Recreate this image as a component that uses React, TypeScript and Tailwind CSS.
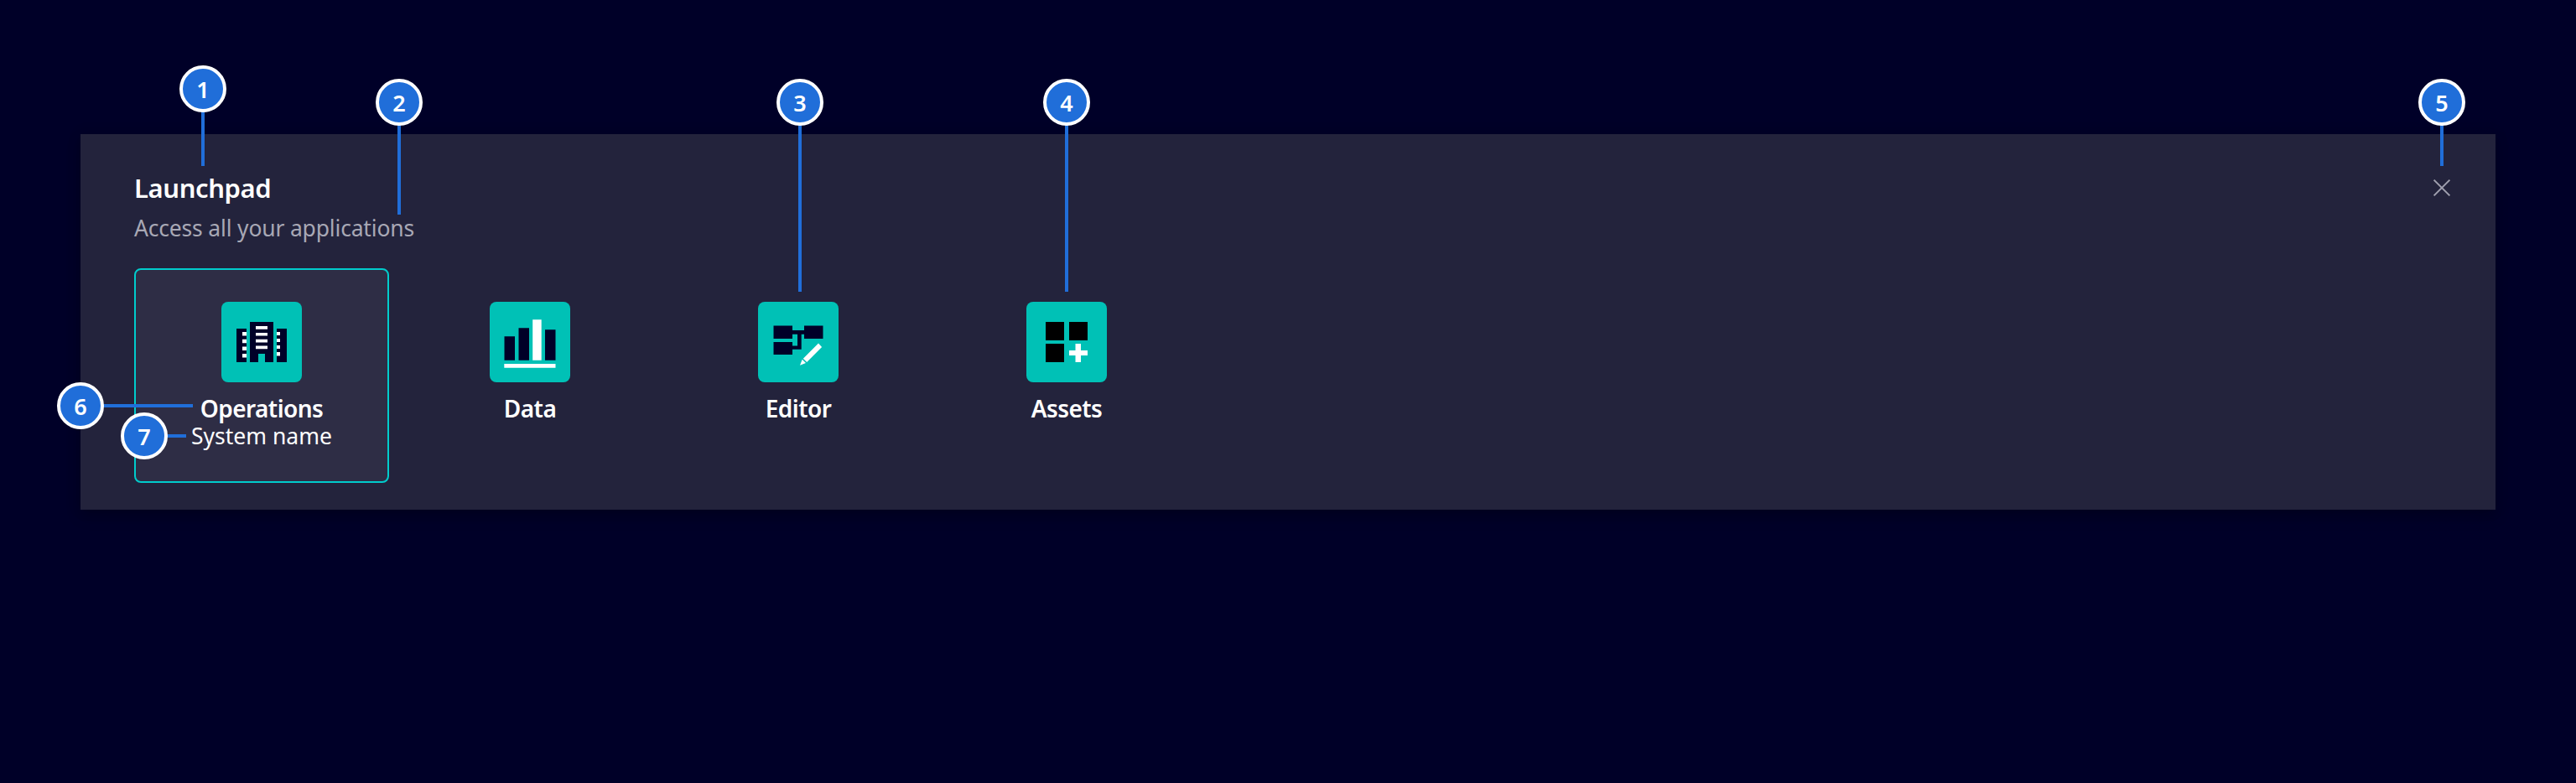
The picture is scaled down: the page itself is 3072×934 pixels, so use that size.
import type { ReactNode } from "react";

type Marker = { n: number; pos: string; line: string };

const markers: Marker[] = [
  { n: 1, pos: "left-[214px] top-[78px]", line: "left-[26px] top-[54px] w-1 h-[66px]" },
  { n: 2, pos: "left-[448px] top-[94px]", line: "left-[26px] top-[54px] w-1 h-[108px]" },
  { n: 3, pos: "left-[926px] top-[94px]", line: "left-[26px] top-[54px] w-1 h-[200px]" },
  { n: 4, pos: "left-[1244px] top-[94px]", line: "left-[26px] top-[54px] w-1 h-[200px]" },
  { n: 5, pos: "left-[2884px] top-[94px]", line: "left-[26px] top-[54px] w-1 h-[50px]" },
  { n: 6, pos: "left-[68px] top-[456px]", line: "left-[54px] top-[26px] h-1 w-[108px]" },
  { n: 7, pos: "left-[144px] top-[492px]", line: "left-[54px] top-[26px] h-1 w-[24px]" },
];

const navy = "#000028";

function OperationsIcon() {
  return (
    <>
      <path fill={navy} d="M18 32h12v40H18zM66 32h12v40H66zM34 24h28v48H52V62h-8v10H34z" />
      <path
        fill="#fff"
        d="M25 36h5v4.6h-5zM25 44.7h5v4.6h-5zM25 53.4h5V58h-5zM25 62h5v4.6h-5zM66 36h4v4h-4zM66 44h4v4h-4zM66 52h4v4h-4zM66 60h4v4.4h-4zM41 29h14v3.8H41zM41 37h14v3.6H41zM41 44.8h14v3.6H41zM41 52.4h14v3.8H41z"
      />
    </>
  );
}

function DataIcon() {
  return (
    <>
      <path fill={navy} d="M17.5 41.3H30v28.4H17.5zM34.5 31.2H47v38.5H34.5zM66 33.3h12.5v36.4H66z" />
      <path fill="#fff" d="M51.2 21.3h10.5v48.4H51.2zM17.3 74h61.2v4.8H17.3z" />
    </>
  );
}

function EditorIcon() {
  return (
    <>
      <path
        fill={navy}
        d="M18.5 28.5H41V34h14v-5.5h22.5V44H55v-5.3h-3.3v18.1H41V63H18.5V48H41v4.5h6V38.7h-6V44H18.5z"
      />
      <path fill="#fff" d="M72 49.6 76.1 54 58.2 72.1 53.8 67.8zM52.7 68.8 57 73 50 75.8z" />
    </>
  );
}

function AssetsIcon() {
  return (
    <>
      <path fill="#000" d="M23 24h22v22H23zM51 24h22v22H51zM23 50h22v22H23z" />
      <path fill="#fff" d="M58.5 50H65v8h8v6h-8v8h-6.5v-8H51v-6h7.5z" />
    </>
  );
}

function Tile({ icon, label, system, active }: { icon: ReactNode; label: string; system?: string; active?: boolean }) {
  return (
    <div
      className={`flex h-64 w-[304px] flex-col items-center rounded-lg border-2 pt-[38px] ${
        active ? "border-[#00cccc] bg-[#2e2d45]" : "border-transparent"
      }`}
    >
      <svg viewBox="0 0 96 96" className="size-24 shrink-0 rounded-lg bg-[#00c1b6]">
        {icon}
      </svg>
      <span className="mt-[15px] text-[28px] leading-8 font-semibold tracking-[-0.55px] whitespace-nowrap text-white">
        {label}
      </span>
      {system && (
        <span className="mt-px text-[26.5px] leading-8 whitespace-nowrap text-white">{system}</span>
      )}
    </div>
  );
}

export default function App() {
  return (
    <div className="relative h-[934px] w-[3072px] overflow-hidden bg-[#000028] px-24 pt-40 font-['Noto_Sans',sans-serif]">
      <section className="h-[448px] bg-[#23233c] px-16 pt-11 shadow-[0_0_16px_rgba(0,0,0,0.1),0_8px_16px_rgba(0,0,0,0.2)]">
        <header className="flex h-[116px] justify-between">
          <div className="flex flex-col items-start">
            <h1 className="text-[31px] leading-10 font-semibold tracking-[-0.4px] whitespace-nowrap text-white">
              Launchpad
            </h1>
            <p className="mt-2 text-[26.5px] leading-10 tracking-[-0.18px] whitespace-nowrap text-[#a8a8b5]">
              Access all your applications
            </p>
          </div>
          <svg viewBox="0 0 20 20" className="-mr-[10px] mt-[10px] size-5 overflow-visible">
            <path d="M.6.6l18.8 18.8M19.4.6L.6 19.4" stroke="#a0a0af" strokeWidth="2" fill="none" />
          </svg>
        </header>
        <div className="flex gap-4">
          <Tile active icon={<OperationsIcon />} label="Operations" system="System name" />
          <Tile icon={<DataIcon />} label="Data" />
          <Tile icon={<EditorIcon />} label="Editor" />
          <Tile icon={<AssetsIcon />} label="Assets" />
        </div>
      </section>
      {markers.map((m) => (
        <div key={m.n} className={`absolute size-14 ${m.pos}`}>
          <div className={`absolute bg-[#206ed9] ${m.line}`} />
          <div className="relative flex size-14 items-center justify-center rounded-full border-4 border-white bg-[#206ed9] text-[27px] leading-none font-semibold text-white">
            {m.n}
          </div>
        </div>
      ))}
    </div>
  );
}
